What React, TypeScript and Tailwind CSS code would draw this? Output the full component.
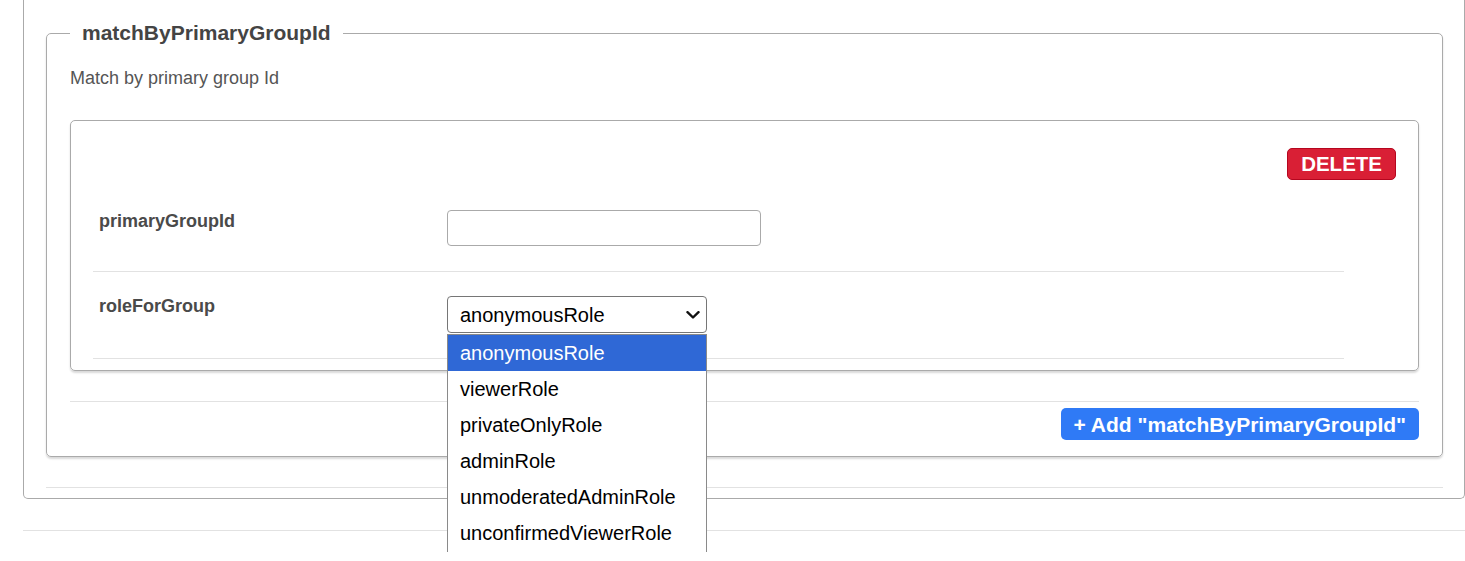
import React from 'react';

const roles = [
  'anonymousRole',
  'viewerRole',
  'privateOnlyRole',
  'adminRole',
  'unmoderatedAdminRole',
  'unconfirmedViewerRole',
];

const ChevronDown: React.FC = () => (
  <svg width="14" height="8" viewBox="0 0 14 8" fill="none">
    <polyline points="1.5,1.2 7,6.5 12.5,1.2" stroke="#111" strokeWidth="2.4" strokeLinecap="round" strokeLinejoin="round" />
  </svg>
);

const App: React.FC = () => {
  return (
    <div className="h-[561px] w-full overflow-hidden bg-white font-['Liberation_Sans',Arial,sans-serif]">
      {/* outer panel, top is scrolled off */}
      <div className="ml-[23px] w-[1442px] rounded-b-[5px] border border-t-0 border-[#aaa] pl-[22px] pr-[21px] pt-[17px] pb-[10px]">
        <fieldset className="rounded-[5px] border border-[#aaa] px-[23px] pb-[16px] shadow-[0_2px_2px_rgba(0,0,0,0.15)]">
          <legend className="px-[12px] text-[21px] font-bold leading-[32px] text-[#444]">matchByPrimaryGroupId</legend>
          <p className="mt-[16px] text-[18px] leading-[27px] text-[#555]">Match by primary group Id</p>

          {/* item card */}
          <div className="mt-[28px] rounded-[5px] border border-[#aaa] pt-[27px] pb-[11px] pl-[22px] pr-[22px] shadow-[0_2px_2px_rgba(0,0,0,0.15)]">
            <div className="flex justify-end">
              <button className="h-[32px] rounded-[5px] border border-[#b5061f] bg-[#d91f35] px-[13px] text-[20.5px] font-bold leading-none text-white">
                DELETE
              </button>
            </div>

            <div className="mr-[52px]">
              <div className="mt-[6px] flex border-b border-[#e2e2e2] pt-[24px] pb-[25px]">
                <div className="-mt-[2px] w-[354px] pl-[6px] text-[18px] font-bold leading-[27px] text-[#4a4a4a]">primaryGroupId</div>
                <input
                  type="text"
                  className="h-[36px] w-[314px] rounded-[4px] border border-[#aaa] px-[12px] text-[20px] outline-none"
                />
              </div>
              <div className="flex border-b border-[#e2e2e2] pt-[24px] pb-[25px]">
                <div className="-mt-[3px] w-[354px] pl-[6px] text-[18px] font-bold leading-[27px] text-[#4a4a4a]">roleForGroup</div>
                <div className="relative">
                  <div className="flex h-[37px] w-[260px] items-center justify-between rounded-[4px] border border-[#767676] pl-[12px] pr-[6px] text-[20px] text-black">
                    <span>anonymousRole</span>
                    <ChevronDown />
                  </div>
                  {/* open option list */}
                  <div className="absolute left-0 top-[38px] z-10 h-[218px] w-[260px] overflow-hidden border-x border-t border-[#8a8a8a] bg-white">
                    {roles.map((r, i) => (
                      <div
                        key={r}
                        className={
                          i === 0
                            ? 'flex h-[36px] items-center bg-[#2f68d6] pl-[12px] text-[20px] text-white'
                            : 'flex h-[36px] items-center pl-[12px] text-[20px] text-black'
                        }
                      >
                        {r}
                      </div>
                    ))}
                  </div>
                </div>
              </div>
            </div>
          </div>

          <div className="mt-[30px] border-t border-[#e2e2e2]" />
          <div className="mt-[6px] flex justify-end">
            <button className="h-[32px] rounded-[5px] bg-[#2f7af6] px-[13px] text-[21px] font-bold leading-none text-white">
              + Add "matchByPrimaryGroupId"
            </button>
          </div>
        </fieldset>

        <div className="mt-[30px] border-t border-[#e2e2e2]" />
      </div>

      <div className="ml-[23px] mt-[31px] border-t border-[#e2e2e2]" />
    </div>
  );
};

export default App;
